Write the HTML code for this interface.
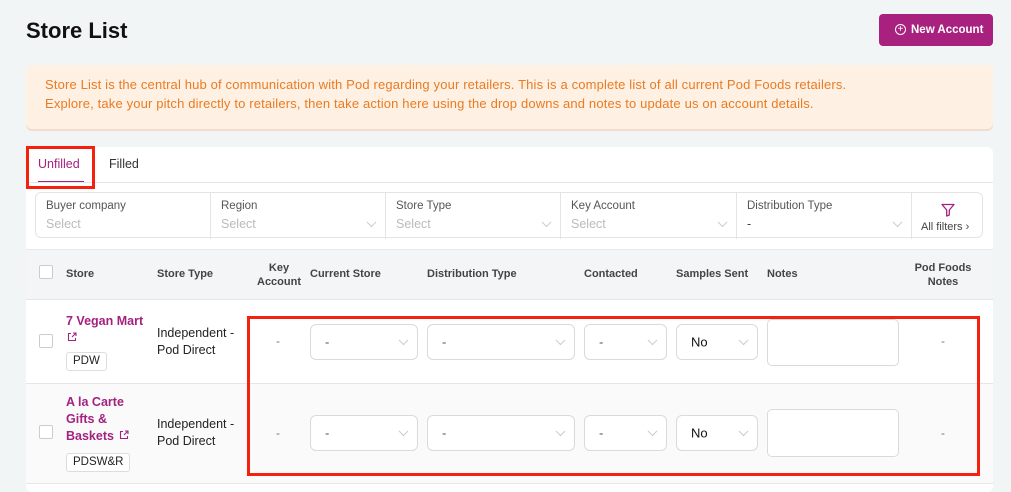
<!DOCTYPE html>
<html><head><meta charset="utf-8"><style>
*{box-sizing:border-box;margin:0;padding:0}
body{width:1011px;height:492px;background:#f2f5f6;font-family:"Liberation Sans",sans-serif;position:relative;overflow:hidden;color:#222}
.a{position:absolute}
.h{font-size:11px;font-weight:bold;color:#444}
.sel{position:absolute;border:1px solid #d9dadd;border-radius:6px;background:#fff;font-size:13px;color:#555}
.sel span{position:absolute;left:14px;top:50%;transform:translateY(-50%)}
.chev{position:absolute;right:10px;top:50%;width:7px;height:7px;border-right:1px solid #ccc;border-bottom:1px solid #ccc;transform:translateY(-75%) rotate(45deg)}
.fc{position:absolute;top:0;height:46px;border-right:1px solid #e3e4e6}
.fc .l{position:absolute;left:10px;top:7px;font-size:11.5px;color:#555}
.fc .v{position:absolute;left:10px;top:24px;font-size:12.5px;color:#bbb}
.fc .chev{top:31px}
.ta{position:absolute;border:1px solid #d9dadd;border-radius:5px;background:#fff}
.cb{position:absolute;width:14px;height:14px;border:1px solid #ccc;border-radius:2px;background:#fff}
.nm{position:absolute;left:66px;font-size:12.5px;font-weight:bold;color:#a3227f;line-height:17px}
.tag{position:absolute;left:66px;border:1px solid #ddd;border-radius:3px;font-size:11.5px;padding:0 6px;line-height:17px;background:#fff}
.st{position:absolute;left:157px;font-size:12.5px;line-height:17px;color:#222}
.dash{position:absolute;font-size:12px;color:#777}
</style></head><body>
<div class="a" style="left:26px;top:18px;font-size:22px;font-weight:bold;color:#111">Store List</div>
<div class="a" style="left:879px;top:14px;width:114px;height:32px;background:#a8217f;border-radius:4px;color:#fff;font-size:11.5px;font-weight:bold;line-height:32px;padding-left:32px">New Account</div>
<div class="a" style="left:895px;top:24px;width:11px;height:11px;border:1px solid #fff;border-radius:50%;color:#fff;font-size:10px;line-height:9px;text-align:center">+</div>
<div class="a" style="left:26px;top:65px;width:967px;height:64px;background:#fef0e3;border-radius:6px;box-shadow:0 2px 0 #f2dccb;color:#ea7b22;font-size:13px;letter-spacing:0.15px;line-height:19px;padding:10px 0 0 19px">Store List is the central hub of communication with Pod regarding your retailers. This is a complete list of all current Pod Foods retailers.<br>Explore, take your pitch directly to retailers, then take action here using the drop downs and notes to update us on account details.</div>
<div class="a" style="left:26px;top:147px;width:967px;height:345px;background:#fff;border-radius:6px"></div>
<div class="a" style="left:26px;top:182px;width:967px;height:1px;background:#e5e6e8"></div>
<div class="a" style="left:38px;top:157px;font-size:12.5px;color:#a3227f">Unfilled</div>
<div class="a" style="left:38px;top:181px;width:46px;height:1px;background:#a3227f"></div>
<div class="a" style="left:109px;top:157px;font-size:12.5px;color:#333">Filled</div>
<div class="a" style="left:35px;top:192px;width:948px;height:46px;border:1px solid #e3e4e6;border-radius:6px">
 <div class="fc" style="left:0;width:175px"><div class="l">Buyer company</div><div class="v">Select</div></div>
 <div class="fc" style="left:175px;width:175px"><div class="l">Region</div><div class="v">Select</div><div class="chev"></div></div>
 <div class="fc" style="left:350px;width:175px"><div class="l">Store Type</div><div class="v">Select</div><div class="chev"></div></div>
 <div class="fc" style="left:525px;width:176px"><div class="l">Key Account</div><div class="v">Select</div><div class="chev"></div></div>
 <div class="fc" style="left:701px;width:175px"><div class="l">Distribution Type</div><div class="v" style="color:#444">-</div><div class="chev"></div></div>
 <div class="a" style="left:876px;top:0;width:72px;height:46px;text-align:center">
  <svg width="14" height="14" viewBox="0 0 14 14" style="position:absolute;left:29px;top:10px"><path d="M1 1.5h12L8.3 7v5L5.7 13V7z" fill="none" stroke="#a3227f" stroke-width="1.3" stroke-linejoin="round"/></svg>
  <div style="position:absolute;left:9px;top:28px;font-size:11px;color:#444">All filters ›</div>
 </div>
</div>
<div class="a" style="left:26px;top:249px;width:967px;height:51px;background:#f4f5f6;border-top:1px solid #e8e9eb;border-bottom:1px solid #e5e6e8"></div>
<div class="cb" style="left:39px;top:265px"></div>
<div class="a h" style="left:66px;top:268px">Store</div>
<div class="a h" style="left:157px;top:268px">Store Type</div>
<div class="a h" style="left:256px;top:261px;width:46px;text-align:center;line-height:14px">Key<br>Account</div>
<div class="a h" style="left:310px;top:268px">Current Store</div>
<div class="a h" style="left:427px;top:268px">Distribution Type</div>
<div class="a h" style="left:584px;top:268px">Contacted</div>
<div class="a h" style="left:676px;top:268px">Samples Sent</div>
<div class="a h" style="left:767px;top:268px">Notes</div>
<div class="a h" style="left:910px;top:261px;width:66px;text-align:center;line-height:14px">Pod Foods<br>Notes</div>
<!-- row1 -->
<div class="cb" style="left:39px;top:334px"></div>
<div class="nm" style="top:313px">7 Vegan Mart</div>
<svg class="a" style="left:67px;top:332px" width="10" height="10" viewBox="0 0 10 10"><path d="M4 1.5H1.5v7h7V6M6 1h3v3M9 1L5 5" fill="none" stroke="#a3227f" stroke-width="1.1"/></svg>
<div class="tag" style="top:352px">PDW</div>
<div class="st" style="top:325px">Independent -<br>Pod Direct</div>
<div class="dash" style="left:276px;top:334px">-</div>
<div class="sel" style="left:310px;top:324px;width:108px;height:36px"><span>-</span><div class="chev"></div></div>
<div class="sel" style="left:427px;top:324px;width:148px;height:36px"><span>-</span><div class="chev"></div></div>
<div class="sel" style="left:584px;top:324px;width:83px;height:36px"><span>-</span><div class="chev"></div></div>
<div class="sel" style="left:676px;top:324px;width:82px;height:36px;color:#111"><span>No</span><div class="chev"></div></div>
<div class="ta" style="left:767px;top:319px;width:132px;height:47px"></div>
<div class="dash" style="left:941px;top:334px">-</div>
<div class="a" style="left:26px;top:383px;width:967px;height:1px;background:#e5e6e8"></div>
<!-- row2 -->
<div class="a" style="left:26px;top:384px;width:967px;height:99px;background:#fafafa"></div>
<div class="cb" style="left:39px;top:425px"></div>
<div class="nm" style="top:394px">A la Carte<br>Gifts &amp;<br>Baskets</div>
<svg class="a" style="left:119px;top:430px" width="10" height="10" viewBox="0 0 10 10"><path d="M4 1.5H1.5v7h7V6M6 1h3v3M9 1L5 5" fill="none" stroke="#a3227f" stroke-width="1.1"/></svg>
<div class="tag" style="top:453px">PDSW&amp;R</div>
<div class="st" style="top:416px">Independent -<br>Pod Direct</div>
<div class="dash" style="left:276px;top:426px">-</div>
<div class="sel" style="left:310px;top:415px;width:108px;height:36px"><span>-</span><div class="chev"></div></div>
<div class="sel" style="left:427px;top:415px;width:148px;height:36px"><span>-</span><div class="chev"></div></div>
<div class="sel" style="left:584px;top:415px;width:83px;height:36px"><span>-</span><div class="chev"></div></div>
<div class="sel" style="left:676px;top:415px;width:82px;height:36px;color:#111"><span>No</span><div class="chev"></div></div>
<div class="ta" style="left:767px;top:409px;width:132px;height:48px"></div>
<div class="dash" style="left:941px;top:426px">-</div>
<div class="a" style="left:26px;top:483px;width:967px;height:1px;background:#e5e6e8"></div>
<!-- red boxes -->
<div class="a" style="left:26px;top:146px;width:69px;height:43px;border:3px solid #f5210f"></div>
<div class="a" style="left:247px;top:316px;width:733px;height:160px;border:3px solid #f5210f"></div>
</body></html>
